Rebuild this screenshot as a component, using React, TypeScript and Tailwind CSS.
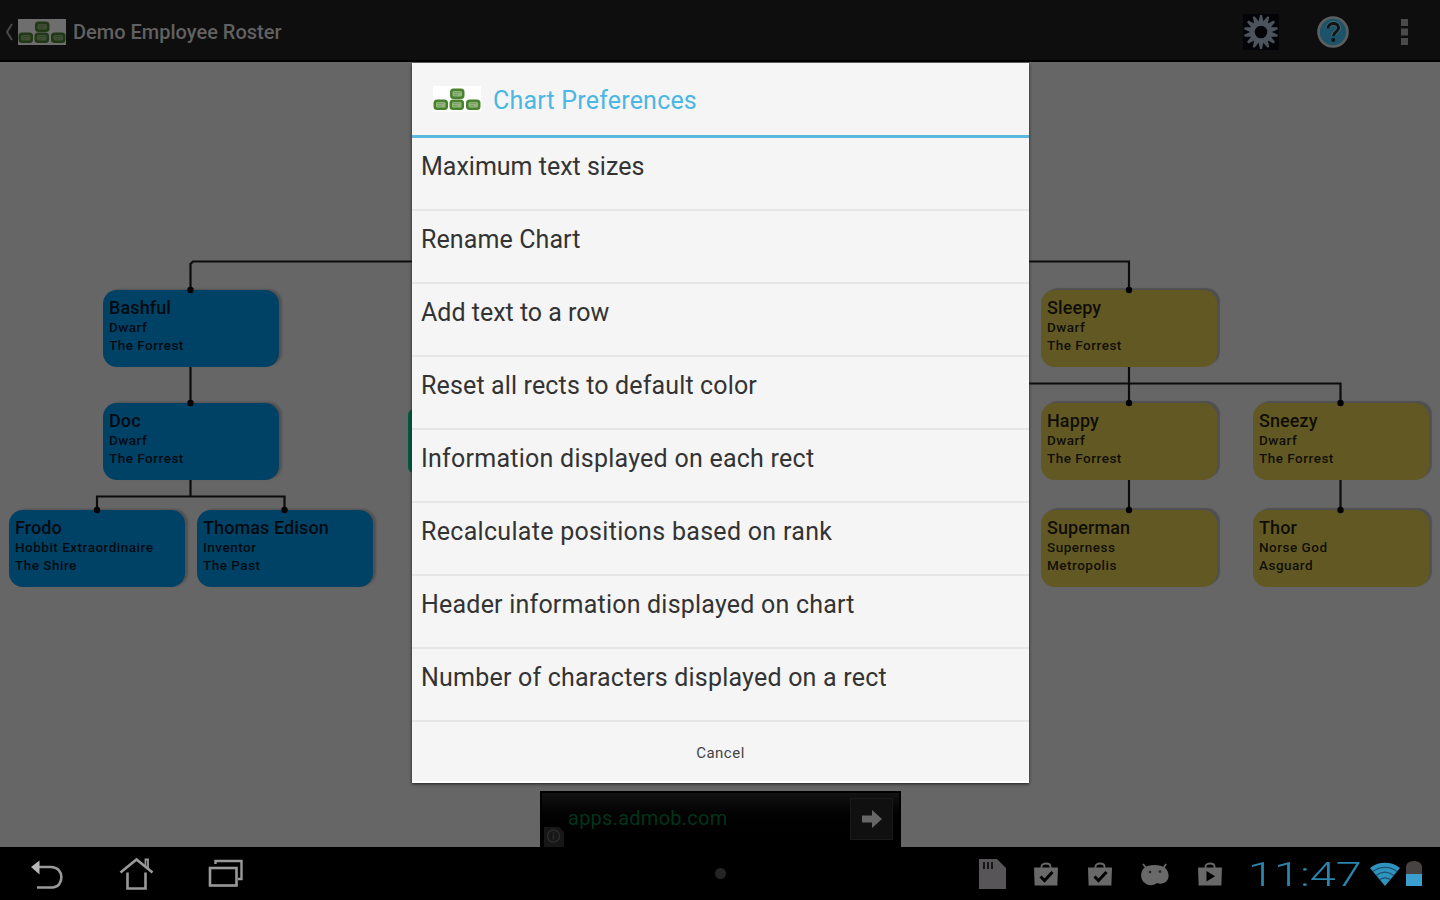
import { useState } from "react"

type Person = {
    name: string
    title: string
    place: string
    x: number
    y: number
    color: "blue" | "olive"
}

const people: Person[] = [
    { name: "Bashful", title: "Dwarf", place: "The Forrest", x: 103, y: 228, color: "blue" },
    { name: "Doc", title: "Dwarf", place: "The Forrest", x: 103, y: 341, color: "blue" },
    { name: "Frodo", title: "Hobbit Extraordinaire", place: "The Shire", x: 9, y: 448, color: "blue" },
    { name: "Thomas Edison", title: "Inventor", place: "The Past", x: 197, y: 448, color: "blue" },
    { name: "Sleepy", title: "Dwarf", place: "The Forrest", x: 1041, y: 228, color: "olive" },
    { name: "Happy", title: "Dwarf", place: "The Forrest", x: 1041, y: 341, color: "olive" },
    { name: "Sneezy", title: "Dwarf", place: "The Forrest", x: 1253, y: 341, color: "olive" },
    { name: "Superman", title: "Superness", place: "Metropolis", x: 1041, y: 448, color: "olive" },
    { name: "Thor", title: "Norse God", place: "Asguard", x: 1253, y: 448, color: "olive" },
]

const preferences = [
    { label: "Maximum text sizes", spacing: "tracking-normal" },
    { label: "Rename Chart", spacing: "tracking-[0.1px]" },
    { label: "Add text to a row", spacing: "tracking-normal" },
    { label: "Reset all rects to default color", spacing: "tracking-[0.14px]" },
    { label: "Information displayed on each rect", spacing: "tracking-[0.25px]" },
    { label: "Recalculate positions based on rank", spacing: "tracking-[0.3px]" },
    { label: "Header information displayed on chart", spacing: "tracking-[0.21px]" },
    { label: "Number of characters displayed on a rect", spacing: "tracking-[0.21px]" },
]

// top point of every box that has a parent
const joints = [[190.5, 228], [190.5, 341], [97, 448], [284.5, 448], [1129, 228], [1129, 341], [1340.5, 341], [1129, 448], [1340.5, 448]]

const ChartLogo = ({ dim }: { dim?: boolean }) => (
    <svg width="48" height="26" viewBox="0 0 48 26" className={dim ? "brightness-[0.43]" : ""}>
        <rect width="48" height="26" fill="#fff" />
        {[[17, 2.5], [0.5, 13.5], [16.5, 13.5], [33, 13.5]].map(([x, y]) => (
            <g key={`${x}-${y}`}>
                <rect x={x} y={y} width="14.5" height="10.5" rx="3.5" fill="#4a8230" />
                <rect x={x + 2.5} y={y + 2.5} width="9.5" height="5.5" rx="1.5" fill="#93b57c" />
                <path d={`M${x + 4} ${y + 4}h6M${x + 4} ${y + 6.2}h4`} stroke="#6b9a52" strokeWidth="0.8" />
            </g>
        ))}
    </svg>
)

const Gear = () => {
    const teeth = Array.from({ length: 14 }, (_, i) => i * (360 / 14))
    return (
        <svg width="36" height="36" viewBox="0 0 36 36">
            <rect width="36" height="36" fill="#030407" />
            <g fill="#4d535d">
                {teeth.map((a) => (
                    <path key={a} d="M15.400 8 17 1h2L20.600 8Z" transform={`rotate(${a} 18 18)`} />
                ))}
            </g>
            <circle cx="18" cy="18" r="8.800" fill="none" stroke="#4d535d" strokeWidth="5" />
        </svg>
    )
}

const Help = () => (
    <svg width="34" height="34" viewBox="0 0 34 34">
        <circle cx="17" cy="17" r="14.500" fill="#1d5368" stroke="#5b5f60" strokeWidth="2.600" />
        <path d="M12 13.500c0-6.500 10.500-6.500 10.500-.8 0 4-5 4.200-5 8.300" fill="none" stroke="#7b7f80" strokeWidth="5" opacity="0.4" />
        <path d="M12 13.500c0-6.500 10.500-6.500 10.500-.8 0 4-5 4.200-5 8.300" fill="none" stroke="#101516" strokeWidth="3" />
        <circle cx="17.300" cy="25" r="2" fill="#101516" />
    </svg>
)

const Bag = ({ play }: { play?: boolean }) => (
    <svg width="26" height="26" viewBox="0 0 26 26">
        <path d="M8.500 7V5.500C8.500 1.500 17.500 1.500 17.500 5.500V7" fill="none" stroke="#696969" strokeWidth="1.800" />
        <path d="M1 6.500h24l-.6 18H1.600Z" fill="#696969" />
        {play
            ? <path d="M9.500 10v10.500l8.500-5.200Z" fill="#000" />
            : <path d="m7.500 15.500 4 4 8-8.500" fill="none" stroke="#000" strokeWidth="3" />}
    </svg>
)

const Box = ({ person }: { person: Person }) => (
    <div
        className={`absolute h-[77px] w-[176px] rounded-[14px] pl-[6px] pt-[7px] text-black/85 ${person.color === "blue"
            ? "bg-[#004166] shadow-[3px_-1px_2px_#515151]"
            : "bg-[#625823] shadow-[3px_-2px_1px_#505052]"}`}
        style={{ left: person.x, top: person.y }}
    >
        <p className="text-[18px] leading-[21px] font-medium tracking-[0.1px]">{person.name}</p>
        <p className="text-[13.5px] leading-[18px] font-medium tracking-[0.5px]">{person.title}</p>
        <p className="text-[13.5px] leading-[18px] font-medium tracking-[0.5px]">{person.place}</p>
    </div>
)

const Chart = () => (
    <div className="relative flex-1 bg-[#666] overflow-hidden">
        <div className="absolute left-[408px] top-[347px] h-[64px] w-[20px] rounded-l-[6px] bg-[#00583f]" />
        {people.map((person) => <Box key={person.name} person={person} />)}
        <svg className="absolute left-0 top-0" width="1440" height="785" viewBox="0 0 1440 785">
            <g fill="none" stroke="#0c0c0c" strokeWidth="2.200">
                <path d="M190.500 228V202L193 199.500H1129V228" />
                <path d="M190.500 305V341" />
                <path d="M190.500 418V435M97 448V434.500H284.500V448" />
                <path d="M1129 305V341M900 321.500H1340.500V341" />
                <path d="M1129 418V448M1340.500 418V448" />
            </g>
            {joints.map(([x, y]) => <circle key={`${x}-${y}`} cx={x} cy={y} r="3.200" fill="#000" />)}
        </svg>
        <div className="absolute left-[540px] top-[729px] flex h-[56px] w-[361px] items-center justify-between border-x-2 border-t-2 border-black bg-linear-to-b from-[#131313] to-black to-80% pr-[6px]">
            <p className="pb-[5px] pl-[26px] text-[20px] tracking-[0.25px] text-[#02331b]">apps.admob.com</p>
            <div className="mb-[2px] flex h-[42px] w-[43px] items-center justify-center bg-[#101010] border border-[#191919]">
                <svg width="22" height="20" viewBox="0 0 22 20">
                    <path d="M1 6.500h10V1l10 9-10 9v-5.500H1Z" fill="#666" />
                </svg>
            </div>
            <svg className="absolute bottom-0 left-[2px]" width="20" height="20" viewBox="0 0 20 20">
                <path d="M0 0h15l5 5v15H0Z" fill="#171717" />
                <circle cx="9.500" cy="9" r="6" fill="none" stroke="#2c2c2c" strokeWidth="1.500" />
                <path d="M9.500 5.500v1.500M9.500 8v4.500" stroke="#2c2c2c" strokeWidth="1.500" />
            </svg>
        </div>
    </div>
)

const ActionBar = () => (
    <header className="flex h-[62px] items-center justify-between border-b-2 border-black bg-[#0e0e0e] pb-px">
        <div className="flex items-center pt-1">
            <svg width="18" height="26" viewBox="0 0 18 26">
                <path d="M12 5 7 13l5 8" fill="none" stroke="#4a4a4a" strokeWidth="2" />
            </svg>
            <ChartLogo dim />
            <h1 className="pl-[7px] pt-px text-[20px] leading-[26px] font-medium text-[#616161]">Demo Employee Roster</h1>
        </div>
        <div className="flex items-center pt-1 pr-[30px]">
            <Gear />
            <div className="ml-[37px]"><Help /></div>
            <svg className="ml-[50px]" width="10" height="28" viewBox="0 0 10 28" fill="#4a4a4a">
                <rect x="1" y="1" width="7" height="7" />
                <rect x="1" y="10.500" width="7" height="7" />
                <rect x="1" y="20" width="7" height="7" />
            </svg>
        </div>
    </header>
)

const SystemBar = () => (
    <footer className="flex h-[53px] items-center justify-between bg-black">
        <div className="flex w-[714px] items-center">
            <svg width="260" height="53" viewBox="0 0 260 53" fill="none" stroke="#999" strokeWidth="2.600">
                <path d="M37 20H51C65 20 64 40 53 40.500H37" />
                <path d="M31 20 39.500 13.500V27.500Z" fill="#b8b8b8" stroke="none" />
                <path d="m120.500 25.500 16-13 16 13" />
                <path d="M145.500 19.500V12.500H148V22" strokeWidth="1.800" />
                <path d="M127.500 25.500V41.500H145.500V25.500" />
                <path d="M215.500 17V14H241.500V32H238" strokeWidth="2.400" />
                <rect x="210" y="21" width="26.500" height="17.500" />
            </svg>
        </div>
        <div className="h-[11px] w-[11px] shrink-0 rounded-full bg-[#242424]" />
        <div className="flex w-[714px] items-center justify-end pr-[18px]">
            <svg width="27" height="31" viewBox="0 0 27 31">
                <path d="M0 1h18l9 9v21H0Z" fill="#575557" />
                <path d="M5 4v7M9 4v7M13 4v7" stroke="#171717" strokeWidth="2" />
            </svg>
            <div className="ml-[27px] flex items-center gap-[28px]">
                <Bag />
                <Bag />
                <svg width="28" height="26" viewBox="0 0 28 26">
                    <path d="m6 8-4-5M22 8l3-5" stroke="#696969" strokeWidth="1.800" />
                    <path d="M3 7C7 3 20 3 24 7c5 4 5 13-1 15-3 1-5 1-7 0-4 3-9 3-12 0C-1 19-1 11 3 7Z" fill="#696969" />
                    <circle cx="9" cy="11" r="1.300" fill="#222" />
                    <circle cx="19" cy="10.500" r="1.300" fill="#222" />
                </svg>
                <Bag play />
            </div>
            <div className="ml-[25px] w-[116px]">
                <p className="w-[78px] origin-left scale-x-[1.42] pt-px text-[33px] leading-[53px] font-light text-[#2b86ad]">11:47</p>
            </div>
            <svg className="ml-[6px]" width="30" height="24" viewBox="0 0 30 24">
                <path d="M0 6C8-1 22-1 30 6L15 24Z" fill="#2f93c0" />
                <path d="M3 9.500C10 4 20 4 27 9.500M6 13.500c6-4.500 12-4.500 18 0M9.500 17.500c4-2.500 7-2.500 11 0" fill="none" stroke="#1a526b" strokeWidth="1.200" />
            </svg>
            <svg className="ml-[6px]" width="16" height="25" viewBox="0 0 16 25">
                <path d="M0 13V6c0-8 16-8 16 0v7Z" fill="#474340" />
                <path d="M0 13h16v12H0Z" fill="#3a9fce" />
            </svg>
        </div>
    </footer>
)

const PreferencesDialog = ({ onClose }: { onClose: () => void }) => (
    <div className="absolute left-[412px] top-[63px] flex h-[720px] w-[617px] flex-col border-b-2 border-white bg-[#f5f5f5] shadow-[0_1px_3px_#222]">
        <div className="flex h-[75px] items-center border-b-[3px] border-[#5bb9dd] pl-[21px] pb-px">
            <ChartLogo />
            <h2 className="pl-[12px] pt-[5px] text-[25px] tracking-[0.2px] text-[#4bb7e2]">Chart Preferences</h2>
        </div>
        <ul>
            {preferences.map((item) => (
                <li key={item.label} className="h-[73px] cursor-pointer border-b-2 border-[#e6e6e6] pl-[9px] pt-[11px]">
                    <p className={`whitespace-nowrap text-[25px] leading-[35px] text-[#333] ${item.spacing}`}>{item.label}</p>
                </li>
            ))}
        </ul>
        <button onClick={onClose} className="flex-1 cursor-pointer pt-[4px] text-[15px] tracking-[0.5px] text-[#444]">Cancel</button>
    </div>
)

export default function App() {
    const [isOpen, setOpen] = useState(true)

    return (
        <div className="relative flex h-[900px] w-[1440px] flex-col overflow-hidden font-[Roboto,sans-serif]">
            <ActionBar />
            <Chart />
            <SystemBar />
            {isOpen && <PreferencesDialog onClose={() => setOpen(false)} />}
        </div>
    )
}
